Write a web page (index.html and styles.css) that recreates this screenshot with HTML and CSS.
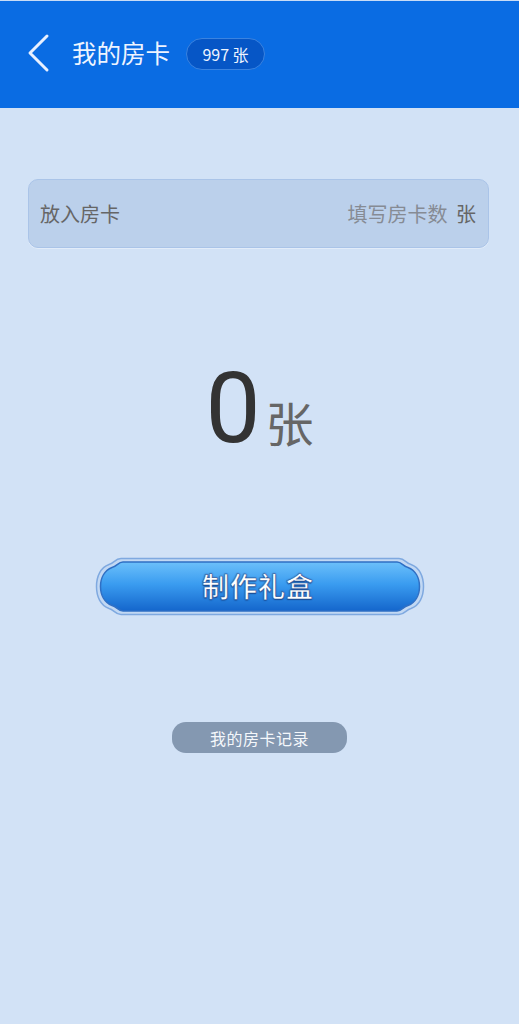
FILE: index.html
```html
<!DOCTYPE html>
<html lang="zh-CN">
    <head>
        <meta charset="UTF-8">
        <meta name="viewport" content="width=device-width, initial-scale=1.0">
        <title>我的房卡</title>
        <link rel="stylesheet" href="styles.css">
    </head>
    <body>
        <header class="topBar">
            <svg class="backIcon" width="26" height="40" viewBox="0 0 26 40">
                <path d="M22 3 L5 20 L22 37" fill="none" stroke="#e8f0ff" stroke-width="3" stroke-linecap="round" stroke-linejoin="round"/>
            </svg>
            <h1 class="title">我的房卡</h1>
            <span class="badge">997 张</span>
        </header>

        <main class="content">
            <div class="cardInput">
                <span class="label">放入房卡</span>
                <span class="inputRight"><span class="placeholder">填写房卡数</span> 张</span>
            </div>

            <div class="count">
                <span class="countNum">0</span><span class="countUnit">张</span>
            </div>

            <button class="makeButton">
                <svg class="makeShape" width="330" height="59" viewBox="0 0 330 59">
                    <defs>
                        <linearGradient id="btnFill" x1="0" y1="0" x2="0" y2="1">
                            <stop offset="0" stop-color="#6cc0fa"/>
                            <stop offset="0.45" stop-color="#3a9cf0"/>
                            <stop offset="1" stop-color="#1466cc"/>
                        </linearGradient>
                    </defs>
                    <path d="M26,1.5 H304 C310,1.5 311,6.5 316,7.5 C324.5,10.5 328.5,19.5 328.5,29.5 C328.5,39.5 324.5,48.5 316,51.5 C311,52.5 310,57.5 304,57.5 H26 C20,57.5 19,52.5 14,51.5 C5.5,48.5 1.5,39.5 1.5,29.5 C1.5,19.5 5.5,10.5 14,7.5 C19,6.5 20,1.5 26,1.5 Z" fill="#c2d8f3" stroke="#7fa9e0" stroke-width="1.5"/>
                    <path d="M28,5 H302 C307,5 308,9.5 313,10.5 C320.5,13.5 324.5,21 324.5,29.5 C324.5,38 320.5,45.5 313,48.5 C308,49.5 307,54 302,54 H28 C23,54 22,49.5 17,48.5 C9.5,45.5 5.5,38 5.5,29.5 C5.5,21 9.5,13.5 17,10.5 C22,9.5 23,5 28,5 Z" fill="url(#btnFill)" stroke="#2f6fc4" stroke-width="1.5"/>
                </svg>
                <span class="makeText">制作礼盒</span>
            </button>

            <button class="recordButton">我的房卡记录</button>
        </main>
    </body>
</html>
```

FILE: styles.css
```css
body {
    margin: 0;
    padding: 0;
    min-height: 100vh;
    background-color: #d2e2f6;
    font-family: "Noto Sans CJK SC", "Noto Sans", sans-serif;
}

.topBar {
    height: 108px;
    border-top: 1px solid #c8dcf6;
    background-color: #0a6ce3;
    display: flex;
    align-items: center;
    padding-left: 25px;
    box-sizing: border-box;
}

.backIcon {
    display: block;
    margin-top: -4px;
}

.title {
    margin: -4px 0 0 21px;
    font-size: 24.5px;
    font-weight: 400;
    color: #eef4ff;
}

.badge {
    margin: -2px 0 0 16px;
    width: 79px;
    height: 32px;
    box-sizing: border-box;
    border-radius: 16px;
    border: 1px solid #3a83e0;
    background-color: #0656c6;
    color: #eef4ff;
    font-size: 16px;
    display: flex;
    align-items: center;
    justify-content: center;
}

.content {
    display: flex;
    flex-direction: column;
    align-items: center;
}

.cardInput {
    margin-top: 71px;
    width: 461px;
    height: 69px;
    margin-left: -2px;
    box-sizing: border-box;
    border-radius: 10px;
    border: 1px solid #aac4e8;
    background-color: #bbd0eb;
    box-shadow: 0 1px 0 #e2ecf9;
    display: flex;
    align-items: center;
    justify-content: space-between;
    padding: 0 12px 0 11px;
    font-size: 20px;
    color: #666666;
}

.placeholder {
    color: #868b94;
    font-size: 20px;
    margin-right: 4px;
}

.count {
    margin-top: 112px;
    display: flex;
    align-items: baseline;
    line-height: 1;
}

.countNum {
    font-family: Roboto, "Noto Sans", sans-serif;
    font-size: 98px;
    color: #333333;
}

.countUnit {
    margin-left: 5px;
    font-size: 48px;
    color: #666666;
}

.makeButton {
    position: relative;
    margin-top: 99px;
    margin-left: 1px;
    width: 330px;
    height: 59px;
    padding: 0;
    border: none;
    background: none;
    display: flex;
    align-items: center;
    justify-content: center;
    font-family: "Noto Sans CJK SC", sans-serif;
}

.makeShape {
    position: absolute;
    left: 0;
    top: 0;
}

.makeText {
    position: relative;
    font-size: 27px;
    font-weight: 500;
    color: #ffffff;
    margin: -2px 0 0 -4px;
    letter-spacing: 1px;
    -webkit-text-stroke: 0.4px #1d4f98;
    text-shadow: 0 0 1px #1d4f98, 0 0 2px #1d4f98, 0 1px 1px #1d4f98;
}

.recordButton {
    margin-top: 106px;
    width: 175px;
    height: 31px;
    border: none;
    border-radius: 14px;
    background-color: #8498b1;
    color: #f4f7fb;
    font-size: 16px;
    letter-spacing: 0.5px;
    font-family: "Noto Sans CJK SC", sans-serif;
    padding: 0;
}
```
